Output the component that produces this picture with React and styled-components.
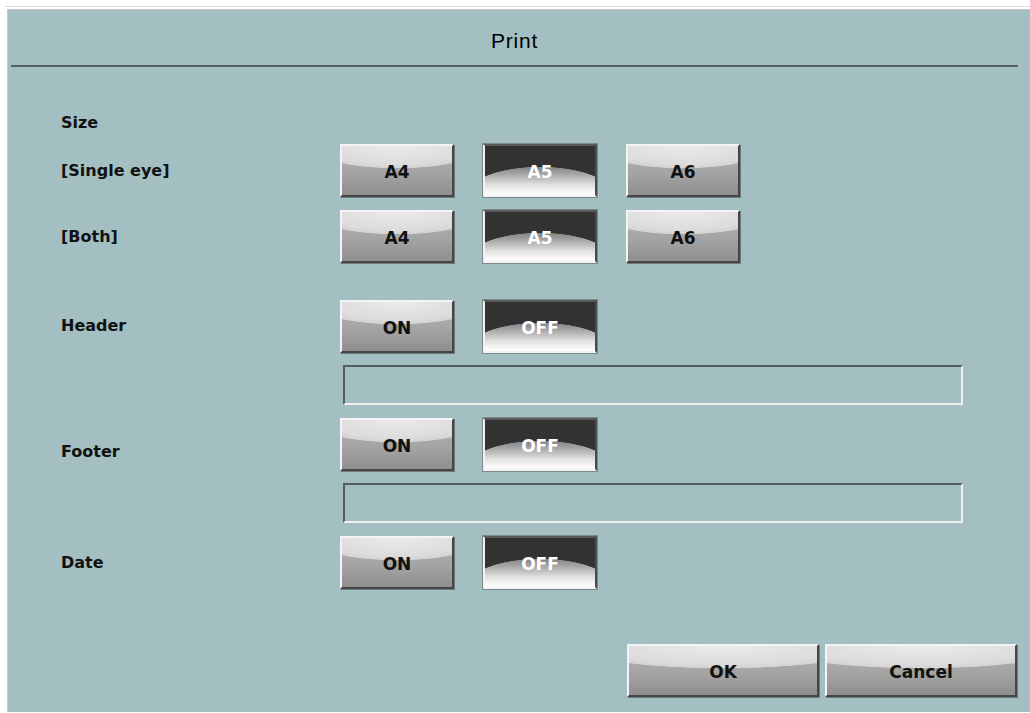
import styled, { createGlobalStyle } from 'styled-components';

const GlobalStyle = createGlobalStyle`
    html, body {
        margin: 0;
        padding: 0;
        background: #ffffff;
    }
    body {
        width: 1030px;
        height: 713px;
        overflow: hidden;
        font-family: "DejaVu Sans", "Liberation Sans", sans-serif;
    }
`

const Frame = styled.div`
    margin: 6px 0 0 5px;
    padding: 2px 0 0 2px;
    border-top: 1px solid #ddd8cc;
    background: #ffffff;
`

const Dialog = styled.div`
    height: 703px;
    border-top: 1px solid #c4c4c4;
    border-left: 1px solid #cfcbc3;
    background: #a3bfc1;
    box-sizing: border-box;
    display: flex;
    flex-direction: column;
`

const TitleBar = styled.div`
    height: 57px;
    margin: 0 12px 0 3px;
    border-bottom: 2px solid #555f60;
    display: flex;
    align-items: center;
    justify-content: center;
    box-sizing: border-box;
`

const Title = styled.h1`
    margin: 6px 0 0 0;
    font-family: "Liberation Sans", Arial, sans-serif;
    font-weight: normal;
    font-size: 21px;
    letter-spacing: 0.8px;
    color: #000;
`

const Body = styled.div`
    padding: 46px 0 0 53px;
    display: flex;
    flex-direction: column;
`

const Row = styled.div`
    display: flex;
    align-items: ${p => p.$top ? 'flex-start' : 'center'};
    margin-top: ${p => p.$gap || 0}px;
`

const Label = styled.div`
    width: 279px;
    flex: none;
    font-weight: bold;
    font-size: 16px;
    color: #111;
    padding-top: ${p => p.$offset || 0}px;
`

const Buttons = styled.div`
    display: flex;
    gap: 29px;
`

const Stack = styled.div`
    display: flex;
    flex-direction: column;
    gap: 12px;
`

const Button = styled.button`
    width: ${p => p.$wide ? '192px' : '114px'};
    height: 53px;
    padding: 3px 0 0 0;
    box-sizing: border-box;
    font-family: "DejaVu Sans", sans-serif;
    font-weight: bold;
    font-size: 17px;
    cursor: pointer;
    border-style: solid;
    border-width: 2px;
    color: ${p => p.$active ? '#ffffff' : '#111111'};
    border-color: ${p => p.$active
        ? '#5a5a5a #4a4a4a #f2f2f2 #f2f2f2'
        : '#f4f4f4 #464646 #464646 #f4f4f4'};
    background: ${p => p.$active
        ? `radial-gradient(ellipse 67% 58% at 50% 100%, transparent 98%, #323232 100%),
           linear-gradient(#7c7c7c 40%, #a8a8a8 58%, #e2e2e2 80%, #fbfbfb 96%)`
        : `radial-gradient(ellipse 80% 46% at 50% 0%, #ebebeb 0%, #dcdcdc 80%, #d4d4d4 97%, transparent 100%),
           linear-gradient(#b6b6b6, #a2a2a2 60%, #8e8e8e)`};
    box-shadow: ${p => p.$active ? '0 0 0 1px #7a8a8b' : '1px 1px 0 #6c7a7b'};
`

const Field = styled.div`
    width: 620px;
    height: 40px;
    margin-left: 3px;
    box-sizing: border-box;
    border-style: solid;
    border-width: 2px;
    border-color: #555a5a #f0f0ee #f0f0ee #555a5a;
    background: #a3bfc1;
`

const Footer = styled.div`
    margin-top: auto;
    padding: 0 13px 15px 0;
    display: flex;
    justify-content: flex-end;
    gap: 6px;
`

const SizeButtons = ({ selected }) => (
    <Buttons>
        {['A4', 'A5', 'A6'].map(s => (
            <Button key={s} $active={s === selected}>{s}</Button>
        ))}
    </Buttons>
)

const Toggle = ({ on }) => (
    <Buttons>
        <Button $active={on}>ON</Button>
        <Button $active={!on}>OFF</Button>
    </Buttons>
)

const App = () => {
    return (
        <>
            <GlobalStyle />
            <Frame>
                <Dialog>
                    <TitleBar>
                        <Title>Print</Title>
                    </TitleBar>
                    <Body>
                        <Row>
                            <Label>Size</Label>
                        </Row>
                        <Row $gap={12}>
                            <Label>[Single eye]</Label>
                            <SizeButtons selected="A5" />
                        </Row>
                        <Row $gap={13}>
                            <Label>[Both]</Label>
                            <SizeButtons selected="A5" />
                        </Row>
                        <Row $gap={37} $top>
                            <Label $offset={16}>Header</Label>
                            <Stack>
                                <Toggle on={false} />
                                <Field />
                            </Stack>
                        </Row>
                        <Row $gap={13} $top>
                            <Label $offset={24}>Footer</Label>
                            <Stack>
                                <Toggle on={false} />
                                <Field />
                            </Stack>
                        </Row>
                        <Row $gap={13}>
                            <Label>Date</Label>
                            <Toggle on={false} />
                        </Row>
                    </Body>
                    <Footer>
                        <Button $wide>OK</Button>
                        <Button $wide>Cancel</Button>
                    </Footer>
                </Dialog>
            </Frame>
        </>
    );
}

export default App;
